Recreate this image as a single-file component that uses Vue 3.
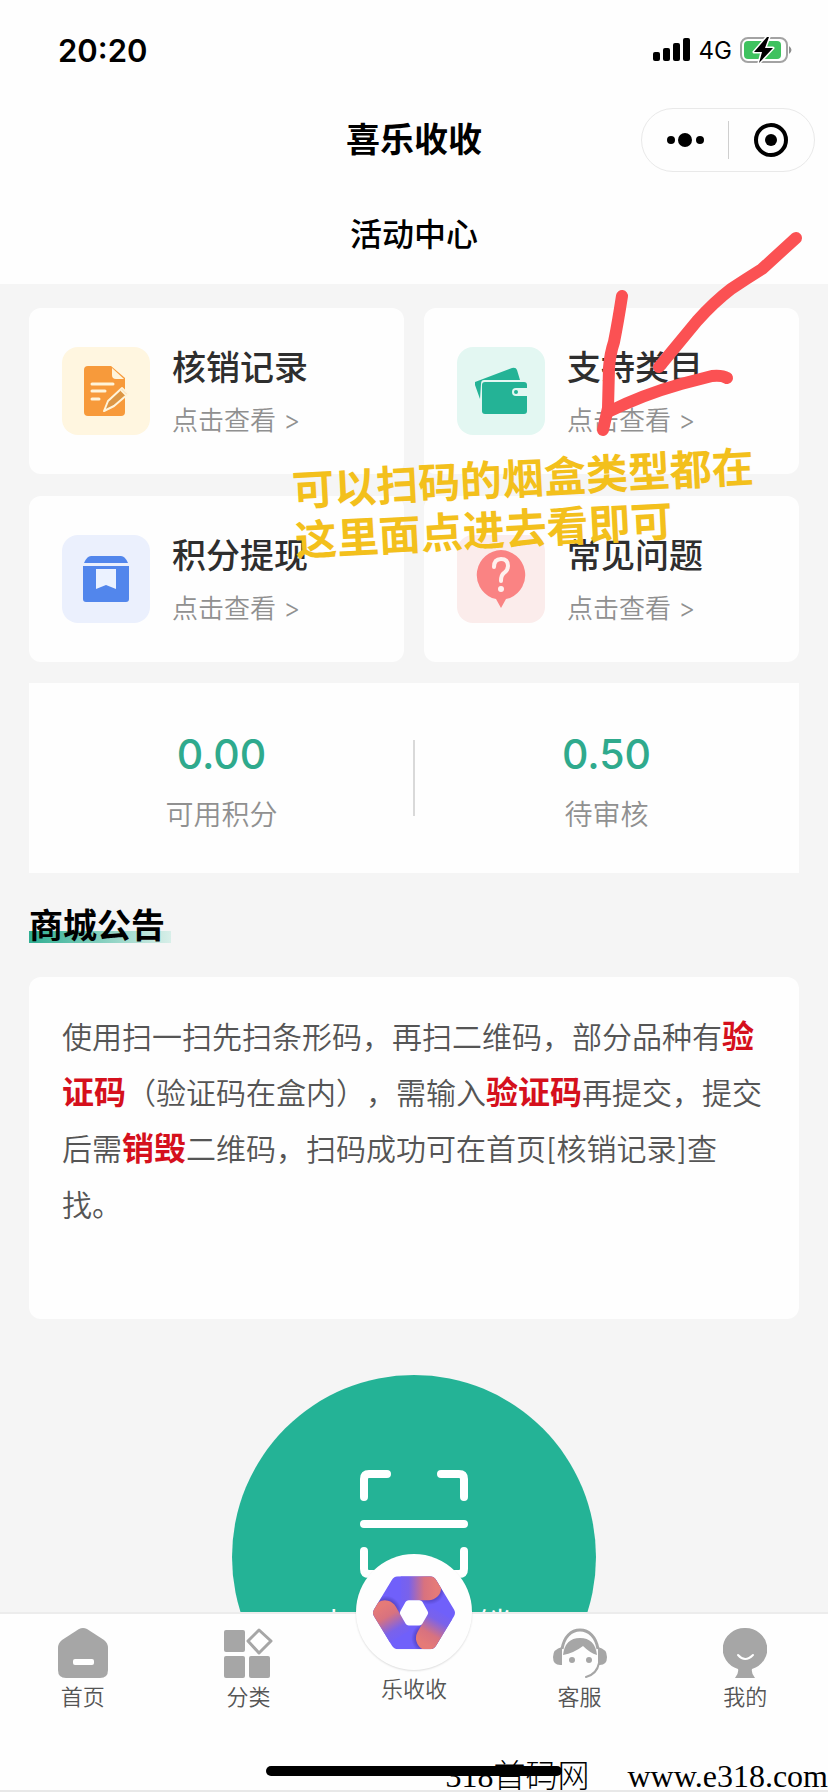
<script setup>
const cards = [
  { id: 'record', title: '核销记录' },
  { id: 'category', title: '支持类目' },
  { id: 'withdraw', title: '积分提现' },
  { id: 'faq', title: '常见问题' }
]

const stats = [
  { value: '0.00', label: '可用积分' },
  { value: '0.50', label: '待审核' }
]

const tabs = [
  { id: 'home', label: '首页' },
  { id: 'sort', label: '分类' },
  { id: 'brand', label: '乐收收' },
  { id: 'service', label: '客服' },
  { id: 'mine', label: '我的' }
]
</script>

<template>
  <div class="page">
    <header class="header">
      <div class="status">
        <span class="time">20:20</span>
        <div class="status-right">
          <svg class="signal" viewBox="0 0 38 24" aria-hidden="true">
            <rect x="0" y="14" width="7" height="9" rx="2" />
            <rect x="10" y="10" width="7" height="13" rx="2" />
            <rect x="20" y="5" width="7" height="18" rx="2" />
            <rect x="30" y="0" width="7" height="23" rx="2" />
          </svg>
          <span class="network">4G</span>
          <svg class="battery" viewBox="0 0 54 28" aria-hidden="true">
            <rect x="1" y="2" width="46" height="24" rx="7" fill="#fff" stroke="#a3a3a3" stroke-width="2" />
            <rect x="4" y="5" width="37" height="18" rx="4" fill="#3fc25f" />
            <path d="M49 10q5 4 0 8z" fill="#8e8e8e" />
            <path d="M27 1L14 16h8l-3 11 14-15h-8l4-11z" fill="#000" stroke="#fff" stroke-width="3" paint-order="stroke" stroke-linejoin="round" />
          </svg>
        </div>
      </div>
      <div class="nav">
        <h1 class="app-name">喜乐收收</h1>
        <div class="capsule">
          <button class="capsule-btn" type="button" aria-label="更多">
            <svg viewBox="0 0 40 40" width="40" height="40">
              <circle cx="6" cy="20" r="4" /><circle cx="20" cy="20" r="7" /><circle cx="35" cy="20" r="4" />
            </svg>
          </button>
          <button class="capsule-btn" type="button" aria-label="关闭">
            <svg viewBox="0 0 40 40" width="40" height="40">
              <circle cx="20" cy="20" r="15" fill="none" stroke="#000" stroke-width="4" /><circle cx="20" cy="20" r="6" />
            </svg>
          </button>
        </div>
      </div>
      <h2 class="page-title">活动中心</h2>
    </header>

    <main class="main">
      <nav class="cards">
        <a v-for="card in cards" :key="card.id" href="#" class="card">
          <span class="tile" :class="card.id">
            <svg v-if="card.id === 'record'" viewBox="0 0 46 52" width="46" height="52" aria-hidden="true">
              <path d="M5 1h23l14 12v34q0 4-4 4H5q-4 0-4-4V5q0-4 4-4z" fill="#f79a3b" />
              <path d="M29 3v7q0 4 4 4h8z" fill="#fff4da" />
              <path d="M9 19h21M9 26h13M9 34h7" stroke="#fff4da" stroke-width="3" stroke-linecap="round" />
              <path d="M21 46l4-10 14-13 6 6-14 12z" fill="#dc9644" stroke="#fff4da" stroke-width="2" stroke-linejoin="round" />
              <path d="M38 25l5 5" stroke="#fff4da" stroke-width="2" />
            </svg>
            <svg v-else-if="card.id === 'category'" viewBox="0 0 54 48" width="54" height="48" aria-hidden="true">
              <path d="M1 15L38 1q4-1 5 2l3 10H10q-3 0-3 4l-1 15L1 18z" fill="#24b396" />
              <rect x="8" y="15" width="45" height="32" rx="3" fill="#24b396" />
              <path d="M53 21H42a4 4 0 0 0 0 8h11z" fill="#e3f7f2" />
              <circle cx="42" cy="25" r="2" fill="#24b396" />
            </svg>
            <svg v-else-if="card.id === 'withdraw'" viewBox="0 0 46 46" width="46" height="46" aria-hidden="true">
              <path d="M1 7q3-7 7-7h30q4 0 7 7z" fill="#5286ec" />
              <path d="M0 10h46v33q0 3-3 3H3q-3 0-3-3z" fill="#5286ec" />
              <path d="M13 13h20v20l-10-4-10 4z" fill="#ebf2ff" />
            </svg>
            <svg v-else viewBox="0 0 50 58" width="50" height="58" aria-hidden="true">
              <path d="M25 0a25 25 0 0 1 9 48l-4 1-5 9-5-9-4-1A25 25 0 0 1 25 0z" fill="#fa8383" />
              <path d="M18 17q0-8 7-8t7 7q0 4-4 7-3 2-3 8" fill="none" stroke="#fff0ee" stroke-width="4" stroke-linecap="round" />
              <circle cx="25" cy="39" r="3" fill="#fff0ee" />
            </svg>
          </span>
          <span class="card-text">
            <span class="card-title">{{ card.title }}</span>
            <span class="card-sub">点击查看 &gt;</span>
          </span>
        </a>
      </nav>

      <section class="stats">
        <div v-for="stat in stats" :key="stat.label" class="stat">
          <span class="stat-value">{{ stat.value }}</span>
          <span class="stat-label">{{ stat.label }}</span>
        </div>
      </section>

      <h3 class="section-title">商城公告</h3>
      <section class="notice">
        <p>使用扫一扫先扫条形码，再扫二维码，部分品种有<strong>验证码</strong>（验证码在盒内），需输入<strong>验证码</strong>再提交，提交后需<strong>销毁</strong>二维码，扫码成功可在首页[核销记录]查找。</p>
      </section>

      <button class="scan" type="button">
        <svg viewBox="0 0 110 110" width="110" height="110" aria-hidden="true">
          <path d="M28 5H10Q5 5 5 10V28M82 5h18q5 0 5 5v18M5 55h100M5 82v18q0 5 5 5h18M105 82v18q0 5-5 5H82" fill="none" stroke="#fff" stroke-width="8" stroke-linecap="round" stroke-linejoin="round" />
        </svg>
        <span>点击扫码核销</span>
      </button>
    </main>

    <footer class="footer">
      <nav class="tabs">
        <a v-for="tab in tabs" :key="tab.id" href="#" class="tab">
          <svg v-if="tab.id === 'home'" viewBox="0 0 50 50" width="50" height="50" aria-hidden="true">
            <path d="M21 1q4-2 8 0l17 11q4 3 4 8v22q0 8-8 8H8q-8 0-8-8V20q0-5 4-8z" fill="#a6a6a6" />
            <rect x="15" y="31" width="21" height="6" rx="2" fill="#fff" />
          </svg>
          <svg v-else-if="tab.id === 'sort'" viewBox="0 0 50 50" width="50" height="50" aria-hidden="true">
            <g fill="#a6a6a6">
              <rect x="1" y="2" width="21" height="22" rx="2" />
              <rect x="1" y="28" width="21" height="22" rx="2" />
              <rect x="26" y="28" width="21" height="22" rx="2" />
            </g>
            <path d="M36 2L48 13 36 25 25 13z" fill="#fff" stroke="#a6a6a6" stroke-width="3" stroke-linejoin="round" />
          </svg>
          <span v-else-if="tab.id === 'brand'" class="brand">
            <svg viewBox="64 86 252 224" width="84" height="75" aria-hidden="true">
              <defs>
                <linearGradient id="bar" x1="140" x2="255" y1="0" y2="0" gradientUnits="userSpaceOnUse">
                  <stop offset="0" stop-color="#7060fa" />
                  <stop offset="0.3" stop-color="#7a62ea" />
                  <stop offset="0.7" stop-color="#d8727f" />
                  <stop offset="1" stop-color="#e57a78" />
                </linearGradient>
                <radialGradient id="shade">
                  <stop offset="0.6" stop-color="#2b1c80" stop-opacity="0.500" />
                  <stop offset="1" stop-color="#2b1c80" stop-opacity="0" />
                </radialGradient>
                <clipPath id="hex">
                  <path d="M142 89h96q12 0 19 12l53 88q6 10 0 20l-53 87q-7 12-19 12h-96q-12 0-19-12L70 209q-6-10 0-20l53-88q7-12 19-12z" />
                </clipPath>
              </defs>
              <g clip-path="url(#hex)">
                <rect x="60" y="80" width="260" height="240" fill="#7060fa" />
                <g v-for="turn in [0, 120, 240]" :key="turn" :transform="`rotate(${turn} 190 199)`">
                  <circle cx="236" cy="127" r="48" fill="url(#shade)" />
                  <path d="M150 86h84a37 37 0 0 1 0 75h-84z" fill="url(#bar)" />
                </g>
              </g>
              <path d="M174 161h32q6 0 9 5l16 28q3 5 0 10l-16 28q-3 5-9 5h-32q-6 0-9-5l-16-28q-3-5 0-10l16-28q3-5 9-5z" fill="#fff" />
            </svg>
          </span>
          <svg v-else-if="tab.id === 'service'" viewBox="0 0 54 50" width="54" height="50" aria-hidden="true">
            <path d="M9 21C11 9 18 2 27 2s16 7 18 19" fill="none" stroke="#a6a6a6" stroke-width="3" />
            <path d="M9 19v18Q0 38 0 29q0-8 9-10zM45 19v18q9 1 9-8 0-8-9-10z" fill="#a6a6a6" />
            <path d="M10 27q2-17 17-17t17 17q-7-2-14-9-9 7-20 9z" fill="#a6a6a6" />
            <circle cx="19" cy="32" r="3" fill="#a6a6a6" /><circle cx="36" cy="32" r="3" fill="#a6a6a6" />
            <path d="M46 35q-2 11-13 14" fill="none" stroke="#a6a6a6" stroke-width="2" stroke-linecap="round" />
          </svg>
          <svg v-else viewBox="0 0 44 50" width="44" height="50" aria-hidden="true">
            <path d="M22 0a22 21 0 0 1 7 41q-1 4 3 9H12q4-5 3-9A22 21 0 0 1 22 0z" fill="#a6a6a6" />
            <path d="M15 27q7 8 15 0" fill="none" stroke="#fff" stroke-width="2" stroke-linecap="round" />
          </svg>
          <span class="tab-label">{{ tab.label }}</span>
        </a>
      </nav>
      <span class="watermark"><span>318首码网</span><span>www.e318.com</span></span>
      <span class="home-bar"></span>
    </footer>

    <svg class="arrow" viewBox="0 0 828 1792" aria-hidden="true">
      <g fill="none" stroke="#fb5153" stroke-width="12" stroke-linecap="round" stroke-linejoin="round">
        <path d="M796 238L762 269Q746 279 731 289Q714 302 697 321L659 367" />
        <path d="M622 296Q618 322 614 342Q610 354 609 368L608 408L603 430" />
        <path d="M608 412Q642 395 681 384L712 376Q722 375 727 378" />
      </g>
    </svg>
    <p class="remark">可以扫码的烟盒类型都在<br />这里面点进去看即可</p>
  </div>
</template>

<style>
body {
  margin: 0;
}
</style>

<style scoped>
.page {
  position: relative;
  display: flex;
  flex-direction: column;
  height: 100vh;
  overflow: hidden;
  background: #f5f5f5;
  color: #000;
  font-family: Inter, "Noto Sans CJK SC", sans-serif;
  text-spacing-trim: space-all;
}
h1, h2, h3, p {
  margin: 0;
}
a {
  color: inherit;
  text-decoration: none;
}
button {
  padding: 0;
  border: 0;
  background: none;
  font: inherit;
}
.header {
  flex: none;
  background: #fefefe;
}
.status {
  display: flex;
  align-items: center;
  justify-content: space-between;
  height: 100px;
  padding: 0 34px 0 58px;
}
.time {
  font-size: 31px;
  font-weight: 600;
}
.status-right {
  display: flex;
  align-items: center;
  gap: 8px;
}
.signal {
  width: 38px;
  height: 24px;
}
.network {
  font-size: 24px;
}
.battery {
  width: 54px;
  height: 28px;
}
.nav {
  position: relative;
  display: flex;
  align-items: center;
  justify-content: center;
  height: 80px;
}
.app-name {
  font-size: 34px;
  font-weight: 700;
  line-height: 40px;
}
.capsule {
  position: absolute;
  right: 13px;
  display: flex;
  align-items: center;
  box-sizing: border-box;
  width: 174px;
  height: 64px;
  border: 1px solid #e9e9e9;
  border-radius: 32px;
}
.capsule-btn {
  display: flex;
  flex: 1;
  align-items: center;
  justify-content: center;
  height: 38px;
}
.capsule-btn + .capsule-btn {
  border-left: 1px solid #cfcfcf;
}
.page-title {
  padding-top: 6px;
  font-size: 32px;
  font-weight: 500;
  line-height: 98px;
  text-align: center;
}
.main {
  display: flex;
  flex: 1;
  flex-direction: column;
  min-height: 0;
  padding: 24px 29px 0;
  overflow: hidden;
}
.cards {
  display: grid;
  flex: none;
  grid-template-columns: 1fr 1fr;
  gap: 22px 20px;
}
.card {
  display: flex;
  align-items: center;
  gap: 22px;
  box-sizing: border-box;
  min-height: 166px;
  padding: 0 33px;
  border-radius: 12px;
  background: #fefefe;
}
.tile {
  display: flex;
  flex: none;
  align-items: center;
  justify-content: center;
  width: 88px;
  height: 88px;
  border-radius: 16px;
}
.tile.record { background: #fff6e0; }
.tile.category { background: #e3f7f2; }
.tile.withdraw { background: #ebf0fd; }
.tile.faq { background: #fbeceb; }
.card-text {
  display: flex;
  flex-direction: column;
  gap: 14px;
  padding-top: 6px;
}
.card-title {
  color: #2e2e2e;
  font-size: 34px;
  font-weight: 500;
  line-height: 40px;
}
.card-sub {
  color: #909090;
  font-size: 26px;
  font-weight: 350;
  line-height: 38px;
}
.stats {
  position: relative;
  display: flex;
  flex: none;
  align-items: center;
  min-height: 190px;
  margin-top: 21px;
  background: #fefefe;
}
.stats::after {
  position: absolute;
  left: 50%;
  width: 2px;
  height: 76px;
  margin-left: -1px;
  background: #d9d9d9;
  content: "";
}
.stat {
  display: flex;
  flex: 1;
  flex-direction: column;
  align-items: center;
  gap: 26px;
  padding-top: 18px;
}
.stat-value {
  color: #2faa8d;
  font-size: 41px;
  font-weight: 500;
  line-height: 30px;
}
.stat-label {
  color: #909090;
  font-size: 28px;
  font-weight: 350;
  line-height: 40px;
}
.section-title {
  align-self: flex-start;
  margin: 30px 0 28px;
  padding-right: 6px;
  border-radius: 6px;
  background: linear-gradient(90deg, #2fae92, #d8efe9) 0 28px / 100% 12px no-repeat;
  font-size: 34px;
  font-weight: 700;
  line-height: 46px;
}
.notice {
  flex: none;
  box-sizing: border-box;
  min-height: 342px;
  padding: 32px 33px;
  border-radius: 12px;
  background: #fefefe;
  color: #555;
  font-size: 30px;
  font-weight: 350;
  line-height: 56px;
}
.notice strong {
  color: #d5101c;
  font-size: 32px;
  font-weight: 700;
  line-height: 40px;
}
.scan {
  display: flex;
  flex: none;
  flex-direction: column;
  align-items: center;
  align-self: center;
  gap: 26px;
  box-sizing: border-box;
  width: 364px;
  height: 364px;
  margin-top: 56px;
  padding-top: 94px;
  border-radius: 50%;
  background: #24b396;
  color: #fff;
  font-size: 32px;
  line-height: 40px;
}
.footer {
  position: relative;
  flex: none;
  box-sizing: border-box;
  min-height: 180px;
  border-top: 2px solid #ececec;
  border-bottom: 2px solid #e8e8e8;
  background: #fefefe;
}
.tabs {
  display: grid;
  grid-template-columns: repeat(5, 1fr);
}
.tab {
  display: flex;
  flex-direction: column;
  align-items: center;
  gap: 6px;
  padding-top: 14px;
}
.brand {
  display: flex;
  align-items: center;
  justify-content: center;
  width: 116px;
  height: 116px;
  margin-top: -74px;
  border-radius: 50%;
  background: #fefefe;
  box-shadow: 0 1px 2px #00000022;
}
.tab-label {
  color: #555;
  font-size: 22px;
  font-weight: 350;
  line-height: 26px;
}
.watermark {
  position: absolute;
  right: 0;
  bottom: -4px;
  display: flex;
  gap: 38px;
  font-family: "Liberation Serif", "Noto Sans CJK SC", serif;
  font-size: 32px;
  font-weight: 300;
  line-height: 36px;
}
.home-bar {
  position: absolute;
  bottom: 14px;
  left: 50%;
  width: 296px;
  height: 10px;
  margin-left: -148px;
  border-radius: 5px;
  background: #000;
}
.arrow {
  position: absolute;
  top: 0;
  left: 0;
  width: 100%;
  pointer-events: none;
}
.remark {
  position: absolute;
  top: 466px;
  left: 291px;
  color: #f3c01c;
  font-size: 42px;
  font-weight: 700;
  line-height: 50px;
  white-space: nowrap;
  transform: rotate(-3deg);
  transform-origin: 0 0;
  pointer-events: none;
}
</style>
